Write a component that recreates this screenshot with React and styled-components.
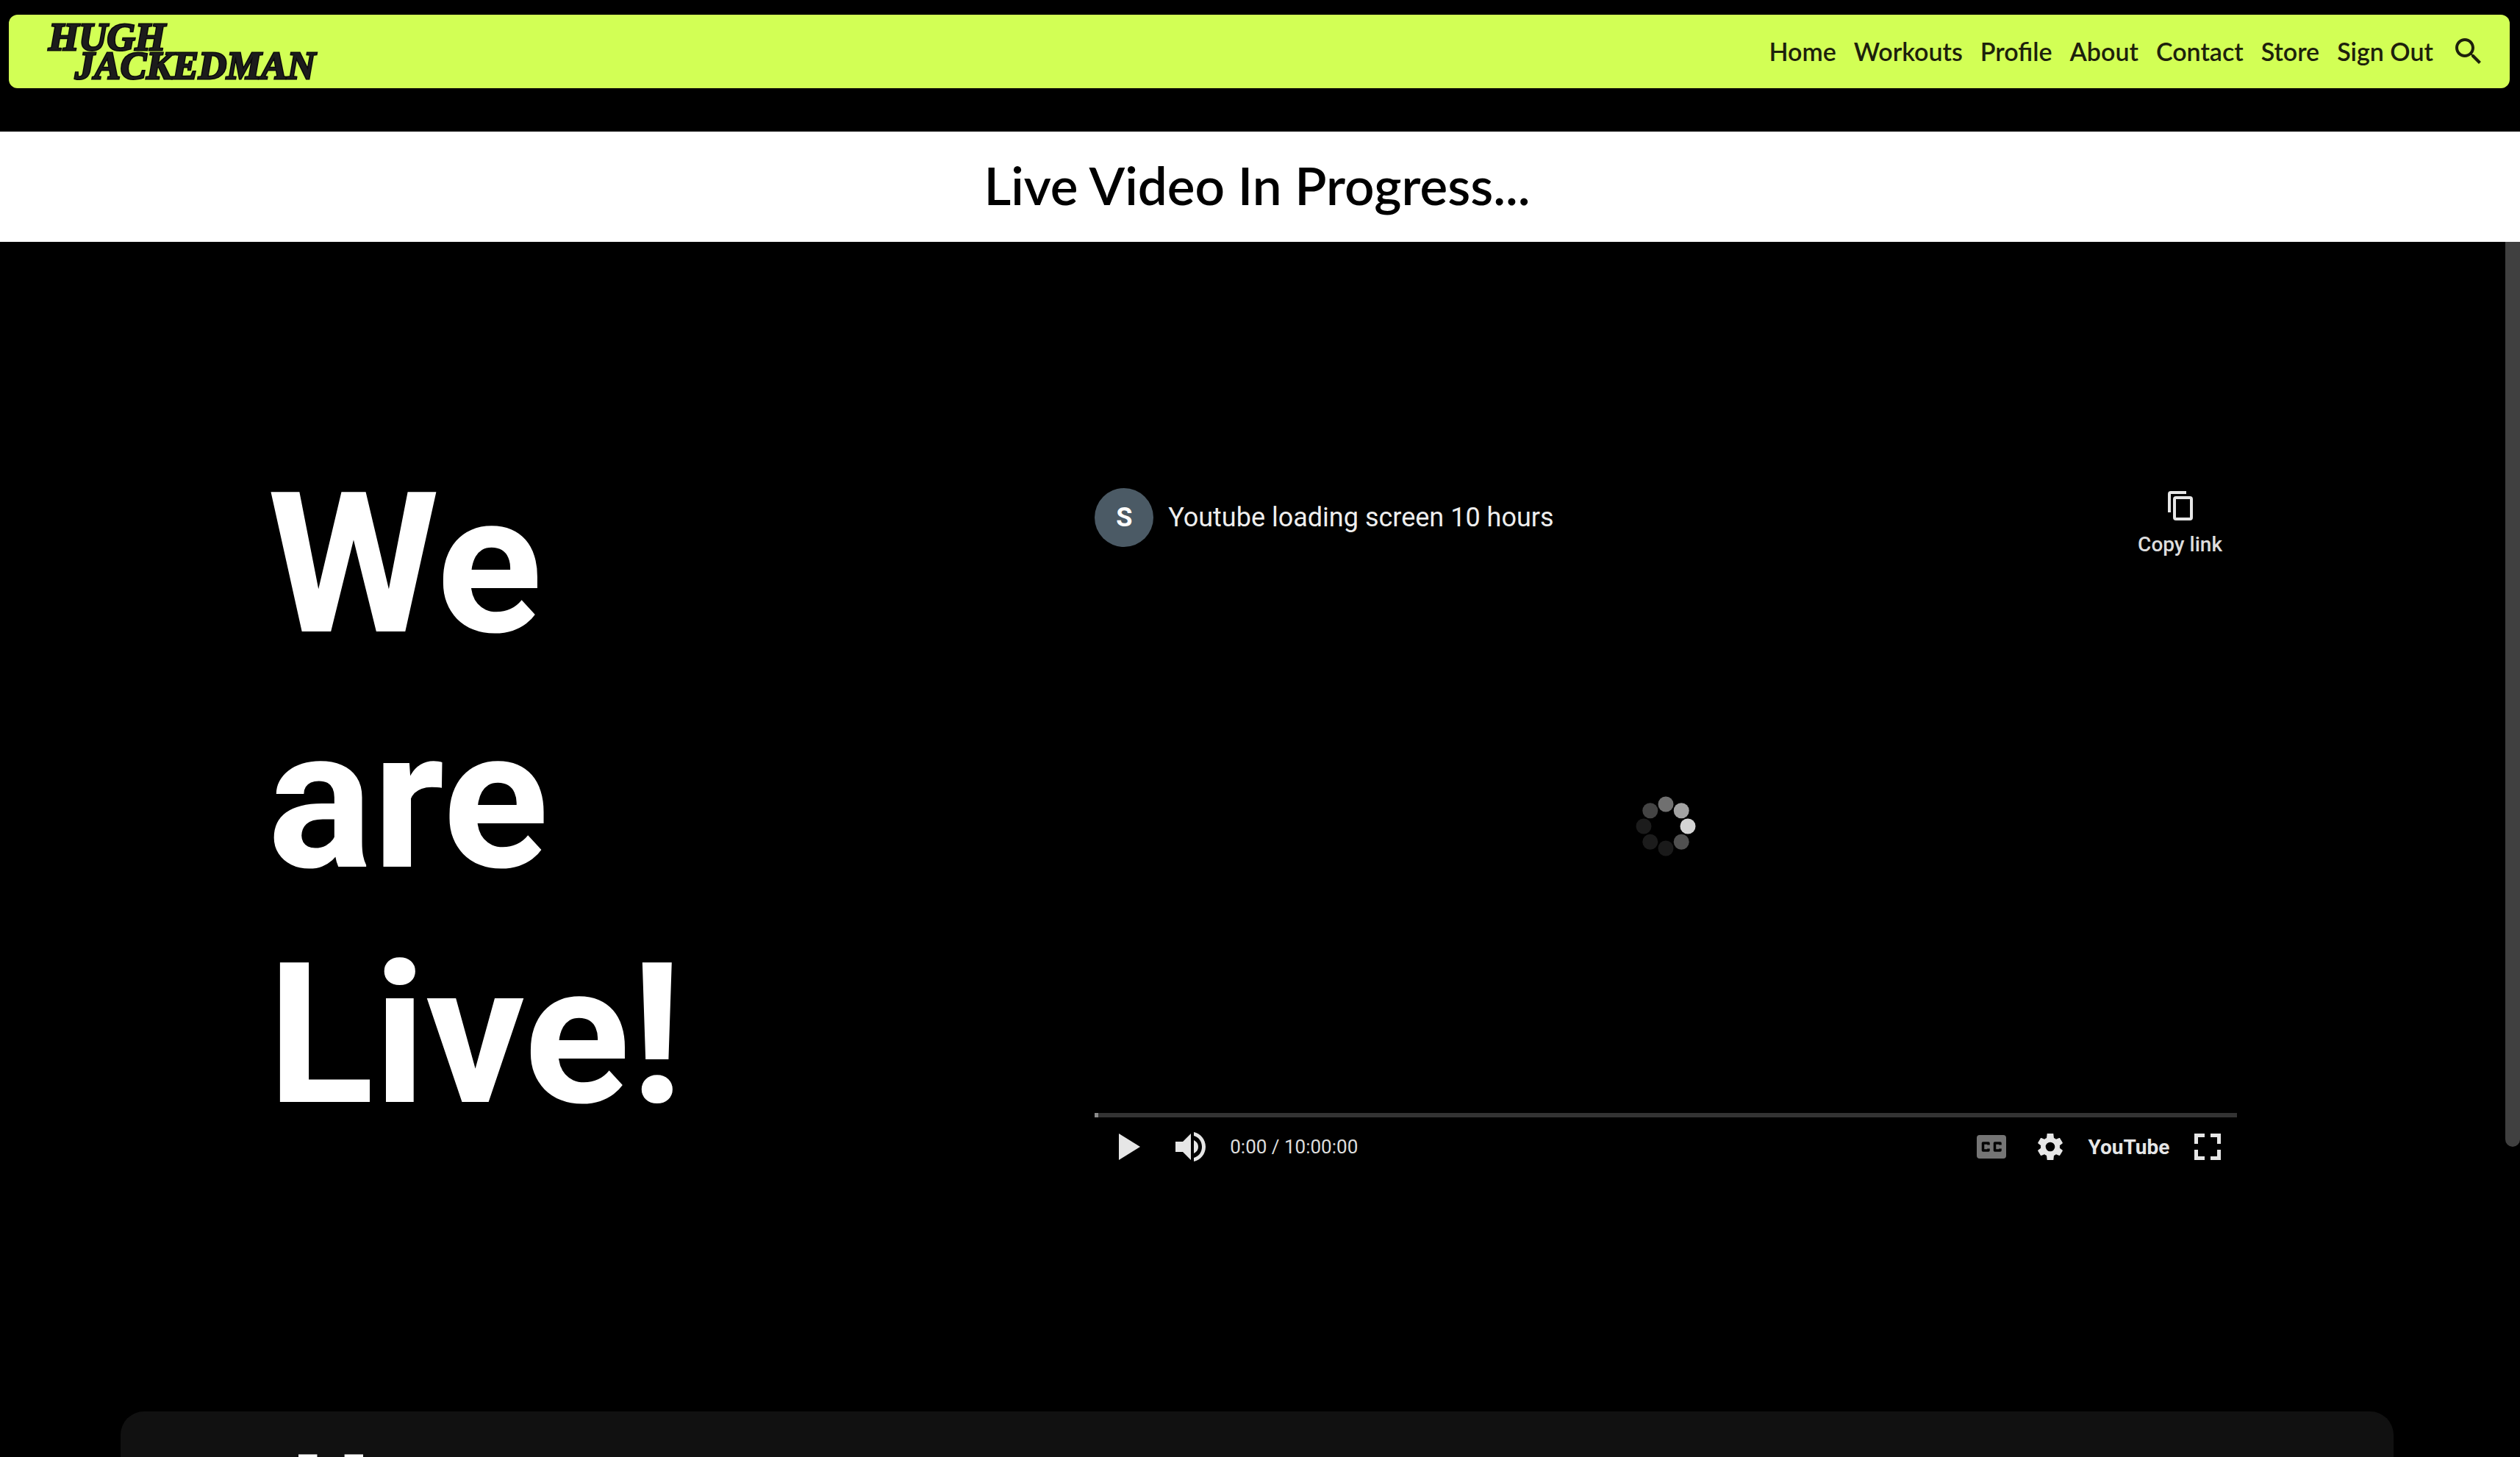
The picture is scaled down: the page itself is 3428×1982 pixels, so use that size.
import React from "react";
import styled, { createGlobalStyle } from "styled-components";

const GlobalStyle = createGlobalStyle`
  *, *::before, *::after { box-sizing: border-box; }
  body { margin: 0; background: #000; color: #fff; font-family: Roboto, "Liberation Sans", sans-serif; }
  button { border: 0; padding: 0; background: none; color: inherit; font: inherit; cursor: pointer; }
  a { color: inherit; text-decoration: none; }
  svg { display: block; }
  h1, h2, p { margin: 0; }
`;

const Page = styled.div`
  display: flex;
  flex-direction: column;
  height: 100vh;
  overflow: hidden;
`;

const NavBar = styled.header`
  display: flex;
  align-items: center;
  justify-content: space-between;
  flex: none;
  height: 100px;
  margin: 20px 14px 59px 12px;
  padding: 0 32px 0 54px;
  border-radius: 12px;
  background: #d2ff55;
  color: #1d210c;
`;

const Logo = styled.a`
  display: flex;
  flex-direction: column;
  font: italic 700 53px/39px "Liberation Serif", serif;
`;

const LogoLine = styled.span`
  padding-left: ${({ $indent }) => $indent || 0}px;
  color: #1c1c1c;
  -webkit-text-stroke: 3px #0b0b0b;
  paint-order: stroke fill;
`;

const NavLinks = styled.nav`
  display: flex;
  align-items: center;
  gap: 24px;
  font: 600 34px/40px Lato, "Open Sans", sans-serif;
`;

const IconButton = styled.button`
  display: grid;
  place-items: center;
  flex: none;
  width: ${({ $width }) => $width || 80}px;
  height: ${({ $height }) => $height || 80}px;
`;

const Banner = styled.div`
  display: grid;
  place-items: center;
  flex: none;
  height: 150px;
  padding: 0 8px 4px 0;
  background: #fff;
  color: #000;
  font: 600 71px/88px Lato, "Open Sans", sans-serif;
`;

const ScrollArea = styled.main`
  position: relative;
  flex: 1;
  min-height: 0;
  overflow: hidden;
  padding: 0 172px 0 164px;

  &::after {
    content: "";
    position: absolute;
    top: 0;
    right: 0;
    width: 20px;
    height: 1231px;
    border-radius: 0 0 10px 10px;
    background: #404040;
  }
`;

const Hero = styled.section`
  display: grid;
  grid-template-columns: minmax(0, 11fr) minmax(0, 16fr);
  align-items: start;
  padding: 311px 189px 312px 200px;
`;

const Headline = styled.h1`
  display: flex;
  flex-direction: column;
  margin-top: -32px;
  font-size: 267px;
  line-height: 320px;
  font-weight: 700;
`;

const Player = styled.section`
  position: relative;
  display: flex;
  flex-direction: column;
  height: 968px;
  padding: 24px 24px 8px;
  color: #e6e6e6;
`;

const PlayerTop = styled.div`
  display: flex;
  align-items: flex-start;
  flex: 1;
`;

const Avatar = styled.span`
  display: grid;
  place-items: center;
  width: 80px;
  height: 80px;
  margin-right: 20px;
  border-radius: 50%;
  background: #4b5a65;
  color: #fff;
  font-size: 36px;
  font-weight: 700;
`;

const VideoTitle = styled.a`
  flex: 1;
  color: #eee;
  font-size: 36px;
  line-height: 80px;
`;

const CopyButton = styled.button`
  display: flex;
  flex-direction: column;
  align-items: center;
  gap: 16px;
  padding: 4px 20px;
  font-size: 28px;
  line-height: 34px;
  font-weight: 500;
  color: #ddd;
`;

const Spinner = styled.svg`
  position: absolute;
  top: 50%;
  left: 50%;
  transform: translate(-50%, -50%);
`;

const Progress = styled.input`
  appearance: none;
  width: 100%;
  height: 6px;
  margin: 0;
  background: linear-gradient(90deg, #8c8c8c 5px, #333 5px);

  &::-webkit-slider-thumb { appearance: none; width: 0; height: 0; }
`;

const Controls = styled.div`
  display: flex;
  align-items: center;
  height: 80px;
  padding-left: 8px;
`;

const Time = styled.span`
  flex: 1;
  padding-left: 16px;
  font-size: 26px;
  color: #ddd;
`;

const YouTubeLink = styled.a`
  width: 134px;
  text-align: center;
  font-size: 28px;
  font-weight: 700;
`;

const Card = styled.section`
  padding: 34px 234px;
  border-radius: 32px;
  background: #111;
`;

const CardTitle = styled.h2`
  font-size: 148px;
  line-height: 160px;
  font-weight: 900;
`;

const links = ["Home", "Workouts", "Profile", "About", "Contact", "Store", "Sign Out"];

const dots = ["#d4d4d4", "#505050", "#1a1a1a", "#1c1c1c", "#1c1c1c", "#444", "#707070", "#a2a2a2"];

export default function App() {
  return (
    <Page>
      <GlobalStyle />
      <NavBar>
        <Logo href="#home">
          <LogoLine>HUGH</LogoLine>
          <LogoLine $indent={36}>JACKEDMAN</LogoLine>
        </Logo>
        <NavLinks>
          {links.map((name) => (
            <a key={name} href={`#${name.toLowerCase().replace(" ", "-")}`}>{name}</a>
          ))}
          <IconButton aria-label="Search" $width={48} $height={48}>
            <svg width="48" height="48" viewBox="0 0 24 24" fill="currentColor">
              <path d="M15.5 14h-.79l-.28-.27C15.41 12.59 16 11.11 16 9.5 16 5.91 13.09 3 9.5 3S3 5.91 3 9.5 5.91 16 9.5 16c1.61 0 3.09-.59 4.23-1.57l.27.28v.79l5 4.99L20.49 19l-4.99-5zm-6 0C7.01 14 5 11.99 5 9.5S7.01 5 9.5 5 14 7.01 14 9.5 11.99 14 9.5 14z" />
            </svg>
          </IconButton>
        </NavLinks>
      </NavBar>

      <Banner>Live Video In Progress...</Banner>

      <ScrollArea>
        <Hero>
          <Headline>
            <span>We</span>
            <span>are</span>
            <span>Live!</span>
          </Headline>
          <Player aria-label="Video player">
            <PlayerTop>
              <Avatar>S</Avatar>
              <VideoTitle href="#video">Youtube loading screen 10 hours</VideoTitle>
              <CopyButton>
                <svg width="34" height="40" viewBox="0 0 34 40" fill="none" stroke="#e6e6e6" strokeWidth="4">
                  <path d="M2 29V4a2 2 0 0 1 2-2h21" />
                  <rect x="9" y="9" width="23" height="29" rx="2" />
                </svg>
                Copy link
              </CopyButton>
            </PlayerTop>
            <Spinner width="84" height="84" viewBox="-42 -42 84 84" aria-label="Loading">
              {dots.map((fill, i) => (
                <circle
                  key={i}
                  cx={30 * Math.cos((i * Math.PI) / 4)}
                  cy={30 * Math.sin((i * Math.PI) / 4)}
                  r="10.5"
                  fill={fill}
                />
              ))}
            </Spinner>
            <Progress type="range" min="0" max="36000" defaultValue="0" aria-label="Seek" />
            <Controls>
              <IconButton aria-label="Play">
                <svg width="30" height="36" viewBox="0 0 30 36" fill="currentColor">
                  <path d="M0 0L29 18L0 36Z" />
                </svg>
              </IconButton>
              <IconButton aria-label="Mute">
                <svg width="48" height="40" viewBox="-6 0 48 40" fill="currentColor">
                  <path d="M0 13H10L21 2V38L10 27H0ZM25 11C29 13 31 16 31 20S29 27 25 29ZM25 0C34 2 41 10 41 20S34 38 25 40V35C32 33 36 27 36 20S32 7 25 5Z" />
                </svg>
              </IconButton>
              <Time>0:00 / 10:00:00</Time>
              <IconButton aria-label="Subtitles">
                <svg width="40" height="32" viewBox="0 0 40 32">
                  <rect width="40" height="32" rx="4" fill="#757575" />
                  <path d="M16 13.500V11H8.500V21H16V18.500M32 13.500V11H24.500V21H32V18.500" fill="none" stroke="#050505" strokeWidth="3.500" strokeLinejoin="round" />
                </svg>
              </IconButton>
              <IconButton aria-label="Settings">
                <svg width="36" height="36" viewBox="2.200 2 19.600 20" fill="currentColor">
                  <path d="M19.140 12.940c.040-.300.060-.610.060-.940 0-.320-.020-.640-.070-.940l2.030-1.580c.180-.140.230-.410.120-.610l-1.920-3.320c-.120-.220-.370-.290-.590-.220l-2.390.960c-.500-.380-1.030-.700-1.620-.940L14.400 2.400V2H9.600L9.250 5.350c-.590.240-1.130.570-1.620.940l-2.390-.960c-.220-.080-.470 0-.590.220L2.740 8.870c-.120.210-.080.470.120.610l2.030 1.580c-.050.300-.090.630-.090.940s.020.640.070.940l-2.030 1.580c-.180.140-.230.410-.120.610l1.920 3.320c.120.220.370.290.590.220l2.390-.960c.500.380 1.030.700 1.620.940L9.600 22h4.800l.360-3.350c.590-.240 1.130-.560 1.620-.940l2.390.960c.220.080.470 0 .590-.220l1.920-3.320c.120-.220.070-.470-.120-.610l-2.020-1.580zM12 15.500a3.500 3.500 0 1 1 0-7 3.500 3.500 0 0 1 0 7z" />
                </svg>
              </IconButton>
              <YouTubeLink href="#youtube">YouTube</YouTubeLink>
              <IconButton aria-label="Full screen">
                <svg width="36" height="36" viewBox="0 0 36 36" fill="none" stroke="currentColor" strokeWidth="5">
                  <path d="M2.500 14V2.500H14M22 2.500H33.500V14M33.500 22V33.500H22M14 33.500H2.500V22" />
                </svg>
              </IconButton>
            </Controls>
          </Player>
        </Hero>
        <Card>
          <CardTitle>H</CardTitle>
        </Card>
      </ScrollArea>
    </Page>
  );
}
